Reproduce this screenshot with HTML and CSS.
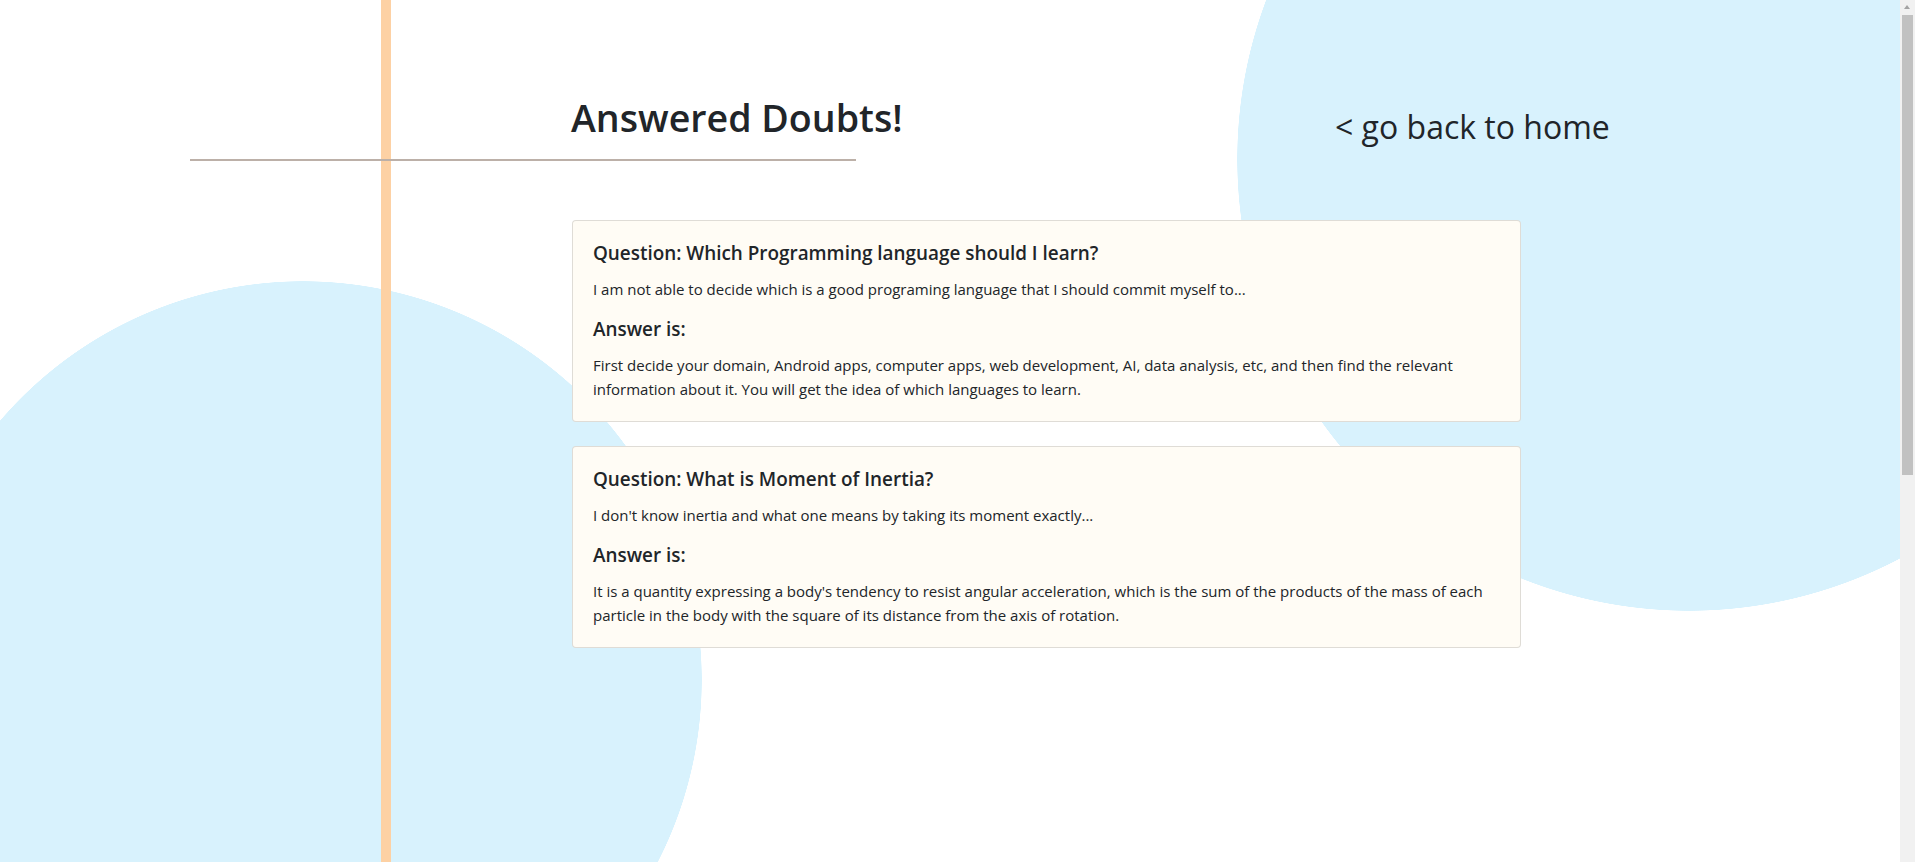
FILE: index.html
```html
<!DOCTYPE html>
<html lang="en">
<head>
<meta charset="utf-8">
<title>Answered Doubts</title>
<link rel="stylesheet" href="styles.css">
</head>
<body>
<main class="page">
  <header class="top">
    <div class="title-block">
      <h1 class="title">Answered Doubts!</h1>
      <hr class="rule">
    </div>
    <a class="home" href="#">&lt; go back to home</a>
  </header>
  <section class="list">
    <article class="card">
      <h5 class="card-title">Question: Which Programming language should I learn?</h5>
      <p class="card-text">I am not able to decide which is a good programing language that I should commit myself to...</p>
      <h5 class="card-title">Answer is:</h5>
      <p class="card-text">First decide your domain, Android apps, computer apps, web development, AI, data analysis, etc, and then find the relevant information about it. You will get the idea of which languages to learn.</p>
    </article>
    <article class="card">
      <h5 class="card-title">Question: What is Moment of Inertia?</h5>
      <p class="card-text">I don't know inertia and what one means by taking its moment exactly...</p>
      <h5 class="card-title">Answer is:</h5>
      <p class="card-text">It is a quantity expressing a body's tendency to resist angular acceleration, which is the sum of the products of the mass of each particle in the body with the square of its distance from the axis of rotation.</p>
    </article>
  </section>
</main>
<div class="scrollbar" aria-hidden="true">
  <div class="scroll-up"></div>
  <div class="scroll-thumb"></div>
</div>
</body>
</html>
```
FILE: styles.css
```css
html {
  background:
    linear-gradient(#fdd1a4, #fdd1a4) 381px 0 / 10px 100% no-repeat,
    radial-gradient(circle 452px at 1689px 159px, #d8f2fd 451.5px, rgba(216, 242, 253, 0) 452px) 0 0 / 100% 1200px no-repeat,
    radial-gradient(circle 399px at 303px 680px, #d8f2fd 398.5px, rgba(216, 242, 253, 0) 399px) 0 0 / 100% 1200px no-repeat,
    #fff;
  min-height: 100%;
}
body {
  margin: 0;
  font-family: "Open Sans", "Liberation Sans", sans-serif;
  font-size: 15px;
  line-height: 24px;
  color: #212529;
}
.top {
  display: flex;
  align-items: flex-start;
}
.title-block {
  margin-left: 190px;
  width: 666px;
}
.title {
  margin: 0;
  padding: 94px 0 0 381px;
  font-size: 37.6px;
  font-weight: 600;
  line-height: 48px;
  white-space: nowrap;
}
.rule {
  margin: 17px 0 0;
  border: 0;
  border-top: 2px solid #bcb0a8;
  height: 0;
}
.home {
  margin: 108px 0 0 479px;
  font-size: 32px;
  line-height: 38px;
  color: #212529;
  text-decoration: none;
  white-space: nowrap;
}
.list {
  margin: 59px 0 0 572px;
  width: 949px;
  display: flex;
  flex-direction: column;
  gap: 24px;
}
.card {
  background: #fffcf5;
  border: 1px solid rgba(0, 0, 0, 0.125);
  border-radius: 4px;
  padding: 20px;
}
.card-title {
  margin: 0 0 12px;
  font-size: 18.9px;
  font-weight: 600;
  line-height: 24px;
}
.card-text {
  margin: 0 0 16px;
}
.card-text:last-child {
  margin-bottom: 0;
}
.scrollbar {
  position: fixed;
  top: 0;
  right: 0;
  width: 15px;
  height: 100%;
  background: #f1f1f1;
}
.scroll-up {
  height: 14px;
  position: relative;
}
.scroll-up::after {
  content: "";
  position: absolute;
  left: 4px;
  top: 5px;
  border-left: 3.5px solid transparent;
  border-right: 3.5px solid transparent;
  border-bottom: 4px solid #a3a3a3;
}
.scroll-thumb {
  margin: 1px 2px 0;
  height: 460px;
  background: #c1c1c1;
}
```
